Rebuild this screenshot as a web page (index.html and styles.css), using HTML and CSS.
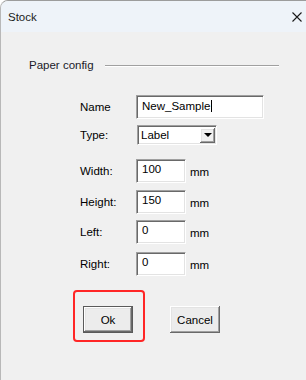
FILE: index.html
```html
<!DOCTYPE html>
<html lang="en">
<head>
    <meta charset="UTF-8">
    <meta name="viewport" content="width=device-width, initial-scale=1.0">
    <title>Stock</title>
    <link rel="stylesheet" href="styles.css">
</head>
<body>
    <div class="window">
        <div class="titlebar">
            <span class="title">Stock</span>
            <svg class="close" width="10" height="10" viewBox="0 0 10 10">
                <path d="M0.5 0.5 L9.5 9.5 M9.5 0.5 L0.5 9.5" stroke="#1a1a1a" stroke-width="1.1" fill="none"/>
            </svg>
        </div>
        <div class="content">
            <div class="group-head">
                <span>Paper config</span>
                <div class="rule"></div>
            </div>
            <div class="form">
                <div class="row">
                    <span class="label">Name</span>
                    <div class="field field-wide">New_Sample<span class="caret"></span></div>
                </div>
                <div class="row row-type">
                    <span class="label">Type:</span>
                    <div class="combo">
                        <span class="combo-text">Label</span>
                        <span class="combo-btn"><span class="arrow"></span></span>
                    </div>
                </div>
                <div class="row row-width">
                    <span class="label">Width:</span>
                    <div class="field">100</div>
                    <span class="unit">mm</span>
                </div>
                <div class="row row-height">
                    <span class="label">Height:</span>
                    <div class="field">150</div>
                    <span class="unit">mm</span>
                </div>
                <div class="row row-left">
                    <span class="label">Left:</span>
                    <div class="field">0</div>
                    <span class="unit">mm</span>
                </div>
                <div class="row row-right">
                    <span class="label">Right:</span>
                    <div class="field">0</div>
                    <span class="unit">mm</span>
                </div>
            </div>
            <div class="actions">
                <div class="highlight">
                    <button class="btn btn-default">Ok</button>
                </div>
                <button class="btn btn-cancel">Cancel</button>
            </div>
        </div>
    </div>
</body>
</html>
```

FILE: styles.css
```css
html, body {
    margin: 0;
    height: 100%;
    background-color: #ffffff;
}
body {
    font-family: Tahoma, "Liberation Sans", Arial, sans-serif;
    font-size: 11.5px;
    color: #000;
    overflow: hidden;
}
.window {
    height: 100%;
    box-sizing: border-box;
    border-top: 1px solid #9c9c9c;
    border-left: 1px solid #b8b8b8;
    border-top-left-radius: 8px;
    background-color: #f0f0f0;
    overflow: hidden;
}
.titlebar {
    height: 31px;
    display: flex;
    align-items: center;
    justify-content: space-between;
    padding: 0 4px 0 7px;
    background-color: #eef3f9;
}
.title {
    color: #1b1b1b;
    margin-top: 1px;
}
.close {
    display: block;
    margin-top: 1px;
}
.content {
    padding: 26px 0 0 28px;
}
.group-head {
    display: flex;
    align-items: center;
    height: 14px;
    line-height: 14px;
    margin-right: 27px;
    color: #1a1a2a;
}
.rule {
    flex: 1;
    height: 1px;
    margin-left: 11px;
    background-color: #a0a0a0;
    box-shadow: 0 1px 0 #ffffff;
}
.form {
    margin-top: 23px;
    padding-left: 51px;
}
.row {
    display: flex;
    align-items: center;
    margin-top: 6px;
}
.row:first-child {
    margin-top: 0;
}
.row-width {
    margin-top: 14px;
}
.row-height {
    margin-top: 7px;
}
.row-right {
    margin-top: 8px;
}
.label {
    width: 56px;
}
.field {
    box-sizing: border-box;
    width: 50px;
    height: 24px;
    padding: 2px 5px 0;
    line-height: 14px;
    background-color: #ffffff;
    border: 1px solid;
    border-color: #a0a0a0 #ffffff #ffffff #a0a0a0;
    box-shadow: inset 1px 1px #696969, inset -1px -1px #e3e3e3;
}
.field-wide {
    width: 128px;
    padding-top: 3px;
}
.caret {
    display: inline-block;
    width: 1px;
    height: 12px;
    margin-left: 1px;
    vertical-align: -2px;
    background-color: #000;
}
.unit {
    margin-left: 4px;
    margin-top: 2px;
}
.combo {
    box-sizing: border-box;
    width: 80px;
    height: 20px;
    margin-left: 1px;
    display: flex;
    align-items: center;
    justify-content: space-between;
    padding: 0 1px 0 3px;
    background-color: #ffffff;
    border: 1px solid;
    border-color: #a0a0a0 #ffffff #ffffff #a0a0a0;
    box-shadow: inset 1px 1px #696969, inset -1px -1px #e3e3e3;
}
.combo-btn {
    box-sizing: border-box;
    width: 15px;
    height: 15px;
    display: flex;
    align-items: center;
    justify-content: center;
    background-color: #f0f0f0;
    box-shadow: inset -1px -1px #696969, inset 1px 1px #ffffff, inset -2px -2px #a0a0a0, inset 2px 2px #e3e3e3;
}
.arrow {
    width: 0;
    height: 0;
    border-left: 4px solid transparent;
    border-right: 4px solid transparent;
    border-top: 4px solid #000;
}
.actions {
    display: flex;
    align-items: flex-start;
    margin-top: 14px;
    margin-left: 44px;
}
.highlight {
    padding: 14px 10px 7px 8px;
    border: 2px solid #ff2626;
    border-radius: 4px;
}
.btn {
    box-sizing: border-box;
    width: 50px;
    height: 27px;
    padding: 0;
    font-family: inherit;
    font-size: 11.5px;
    color: #000;
    background-color: #ececec;
    border: none;
    box-shadow: inset -1px -1px #696969, inset 1px 1px #ffffff, inset -2px -2px #a0a0a0, inset 2px 2px #e3e3e3;
}
.btn-default {
    border: 1px solid #5a5a5a;
}
.btn-cancel {
    margin-left: 25px;
    margin-top: 16px;
}
```
